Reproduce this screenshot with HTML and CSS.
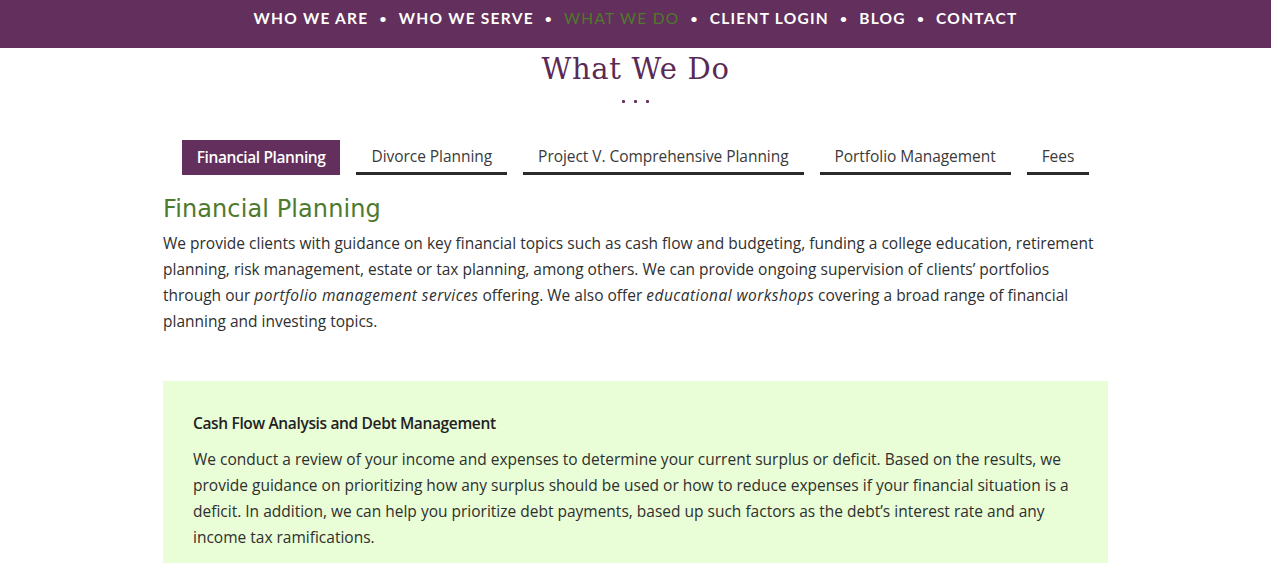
FILE: index.html
```html
<!DOCTYPE html>
<html>
<head>
<meta charset="utf-8">
<link rel="stylesheet" href="styles.css">
</head>
<body>
<header class="topbar">
  <nav class="nav">
    <a class="nav-link">WHO WE ARE</a><span class="sep">•</span>
    <a class="nav-link">WHO WE SERVE</a><span class="sep">•</span>
    <a class="nav-link active">WHAT WE DO</a><span class="sep">•</span>
    <a class="nav-link">CLIENT LOGIN</a><span class="sep">•</span>
    <a class="nav-link">BLOG</a><span class="sep">•</span>
    <a class="nav-link">CONTACT</a>
  </nav>
</header>
<main class="main">
  <h1 class="page-title">What We Do</h1>
  <div class="dots"><span></span><span></span><span></span></div>
  <div class="tabs">
    <a class="tab active">Financial Planning</a>
    <a class="tab">Divorce Planning</a>
    <a class="tab">Project V. Comprehensive Planning</a>
    <a class="tab">Portfolio Management</a>
    <a class="tab">Fees</a>
  </div>
  <section class="content">
    <h2 class="section-title">Financial Planning</h2>
    <p class="text">We provide clients with guidance on key financial topics such as cash flow and budgeting, funding a college education, retirement planning, risk management, estate or tax planning, among others. We can provide ongoing supervision of clients’ portfolios through our <em>portfolio management services</em> offering. We also offer <em>educational workshops</em> covering a broad range of financial planning and investing topics.</p>
    <div class="box">
      <h3 class="box-title">Cash Flow Analysis and Debt Management</h3>
      <p class="text">We conduct a review of your income and expenses to determine your current surplus or deficit. Based on the results, we provide guidance on prioritizing how any surplus should be used or how to reduce expenses if your financial situation is a deficit. In addition, we can help you prioritize debt payments, based up such factors as the debt’s interest rate and any income tax ramifications.</p>
    </div>
  </section>
</main>
</body>
</html>
```
FILE: styles.css
```css
* { box-sizing: border-box; }
html, body { margin: 0; padding: 0; background: #fff; }
body { font-family: "Open Sans", "Noto Sans", sans-serif; color: #333; }

.topbar {
  background: #632f5c;
  height: 48px;
  display: flex;
  justify-content: center;
}
.nav {
  display: flex;
  align-items: center;
  height: 36px;
  font-family: "Lato", "DejaVu Sans", sans-serif;
  font-weight: 700;
  font-size: 15.5px;
  letter-spacing: 1.25px;
  color: #fff;
}
.nav-link { color: #fff; }
.nav-link.active { color: #4e7a2d; font-weight: 400; }
.sep { margin: 0 11px 0 11px; font-size: 12px; }

.main { width: 945px; margin: 0 auto; }

.page-title {
  margin: 0;
  font-family: "DejaVu Serif", serif;
  font-weight: 400;
  font-size: 29px;
  letter-spacing: 0.7px;
  line-height: 40px;
  color: #5a2a55;
  height: 41px;
  display: flex;
  align-items: flex-end;
  justify-content: center;
}
.dots {
  display: flex;
  justify-content: center;
  gap: 9px;
  height: 6px;
  margin-top: 11px;
}
.dots span { width: 3px; height: 3px; background: #632f5c; border-radius: 1px; }

.tabs {
  display: flex;
  justify-content: center;
  gap: 16px;
  margin-top: 34px;
}
.tab {
  display: block;
  height: 35px;
  line-height: 33px;
  padding: 0 15px;
  font-size: 15.5px;
  letter-spacing: -0.05px;
  color: #3a3a3a;
  border-bottom: 3px solid #2b2b2b;
}
.tab.active {
  background: #632f5c;
  color: #fff;
  font-weight: 600;
  border-bottom: none;
  line-height: 35px;
  letter-spacing: -0.4px;
}

.section-title {
  margin: 19px 0 0;
  font-family: "DejaVu Sans", sans-serif;
  font-weight: 400;
  font-size: 24px;
  line-height: 30px;
  letter-spacing: 0.1px;
  color: #4e7a2d;
}
.text {
  margin: 6px 0 0;
  font-size: 15.5px;
  line-height: 26px;
  color: #2f2f2f;
}
.text em { font-style: italic; letter-spacing: 0.45px; }

.box {
  background: #e9fdd6;
  margin-top: 47px;
  padding: 29px 30px 20px;
}
.box-title {
  margin: 0;
  font-size: 15.5px;
  font-weight: 600;
  letter-spacing: -0.35px;
  line-height: 26px;
  color: #222;
}
.box .text { margin-top: 10px; }
```
